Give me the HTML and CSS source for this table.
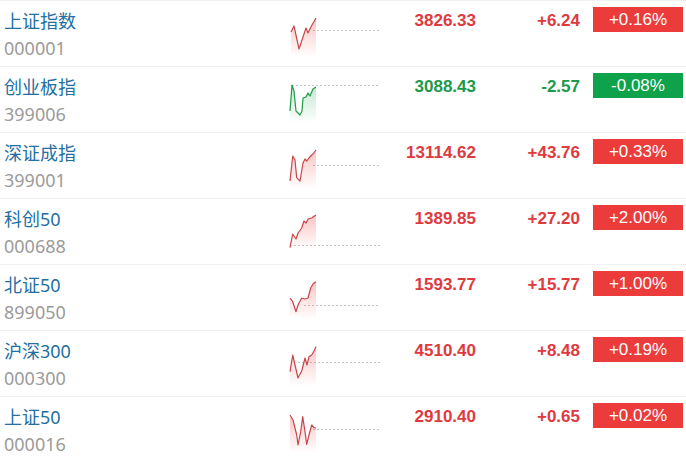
FILE: index.html
```html
<!DOCTYPE html>
<html lang="zh-CN">
<head>
<meta charset="utf-8">
<title>指数行情</title>
<link rel="stylesheet" href="styles.css">
</head>
<body>
<div class="list">

  <div class="row up">
    <div class="name"><div class="title">上证指数</div><div class="code">000001</div></div>
    <div class="spark">
      <svg width="92" height="66" viewBox="0 0 92 66">
        <defs><linearGradient id="f1" x1="0" y1="0" x2="0" y2="1"><stop offset="0" stop-color="#f04848" stop-opacity="0.32"/><stop offset="1" stop-color="#f04848" stop-opacity="0"/></linearGradient></defs>
        <line class="base" x1="25" y1="29.5" x2="92" y2="29.5"/>
        <polygon fill="url(#f1)" points="3,31 6,25 11,48 16,33 18,27 20,32 24,24 28,17 28,56 3,56"/>
        <polyline class="ln-up" points="3,31 6,25 11,48 16,33 18,27 20,32 24,24 28,17"/>
      </svg>
    </div>
    <div class="price">3826.33</div>
    <div class="chg">+6.24</div>
    <div class="badge">+0.16%</div>
  </div>

  <div class="row down">
    <div class="name"><div class="title">创业板指</div><div class="code">399006</div></div>
    <div class="spark">
      <svg width="92" height="66" viewBox="0 0 92 66">
        <defs><linearGradient id="f2" x1="0" y1="0" x2="0" y2="1"><stop offset="0" stop-color="#2aa55a" stop-opacity="0.28"/><stop offset="1" stop-color="#2aa55a" stop-opacity="0"/></linearGradient></defs>
        <line class="base" x1="4" y1="18.5" x2="92" y2="18.5"/>
        <polygon fill="url(#f2)" points="2,44 4,18 6,24 8,44 12,48 14,44 15,31 18,30 20,26 22,29 25,22 28,20 28,56 2,56"/>
        <polyline class="ln-down" points="2,44 4,18 6,24 8,44 12,48 14,44 15,31 18,30 20,26 22,29 25,22 28,20"/>
      </svg>
    </div>
    <div class="price">3088.43</div>
    <div class="chg">-2.57</div>
    <div class="badge">-0.08%</div>
  </div>

  <div class="row up">
    <div class="name"><div class="title">深证成指</div><div class="code">399001</div></div>
    <div class="spark">
      <svg width="92" height="66" viewBox="0 0 92 66">
        <defs><linearGradient id="f3" x1="0" y1="0" x2="0" y2="1"><stop offset="0" stop-color="#f04848" stop-opacity="0.32"/><stop offset="1" stop-color="#f04848" stop-opacity="0"/></linearGradient></defs>
        <line class="base" x1="25" y1="32.5" x2="92" y2="32.5"/>
        <polygon fill="url(#f3)" points="2,48 4.7,23 7,27 8.7,44.7 12,48 15,30 17,26 18.7,28 21,25 23.7,22 25,21 28,17 28,56 2,56"/>
        <polyline class="ln-up" points="2,48 4.7,23 7,27 8.7,44.7 12,48 15,30 17,26 18.7,28 21,25 23.7,22 25,21 28,17"/>
      </svg>
    </div>
    <div class="price">13114.62</div>
    <div class="chg">+43.76</div>
    <div class="badge">+0.33%</div>
  </div>

  <div class="row up">
    <div class="name"><div class="title">科创50</div><div class="code">000688</div></div>
    <div class="spark">
      <svg width="92" height="66" viewBox="0 0 92 66">
        <defs><linearGradient id="f4" x1="0" y1="0" x2="0" y2="1"><stop offset="0" stop-color="#f04848" stop-opacity="0.32"/><stop offset="1" stop-color="#f04848" stop-opacity="0"/></linearGradient></defs>
        <line class="base" x1="2" y1="46.5" x2="92" y2="46.5"/>
        <polygon fill="url(#f4)" points="2,48.7 4.7,35 8,40 10,34 13.7,29 16,22 18,24 20,20 23.7,19 25,18 28,16 28,50 2,50"/>
        <polyline class="ln-up" points="2,48.7 4.7,35 8,40 10,34 13.7,29 16,22 18,24 20,20 23.7,19 25,18 28,16"/>
      </svg>
    </div>
    <div class="price">1389.85</div>
    <div class="chg">+27.20</div>
    <div class="badge">+2.00%</div>
  </div>

  <div class="row up">
    <div class="name"><div class="title">北证50</div><div class="code">899050</div></div>
    <div class="spark">
      <svg width="92" height="66" viewBox="0 0 92 66">
        <defs><linearGradient id="f5" x1="0" y1="0" x2="0" y2="1"><stop offset="0" stop-color="#f04848" stop-opacity="0.32"/><stop offset="1" stop-color="#f04848" stop-opacity="0"/></linearGradient></defs>
        <line class="base" x1="16" y1="40.5" x2="92" y2="40.5"/>
        <polygon fill="url(#f5)" points="2,33 4.7,36.7 8,46.7 10,40 13.7,33 17,34 20,33 22.7,23 25,19 28,16.7 28,54 2,54"/>
        <polyline class="ln-up" points="2,33 4.7,36.7 8,46.7 10,40 13.7,33 17,34 20,33 22.7,23 25,19 28,16.7"/>
      </svg>
    </div>
    <div class="price">1593.77</div>
    <div class="chg">+15.77</div>
    <div class="badge">+1.00%</div>
  </div>

  <div class="row up">
    <div class="name"><div class="title">沪深300</div><div class="code">000300</div></div>
    <div class="spark">
      <svg width="92" height="66" viewBox="0 0 92 66">
        <defs><linearGradient id="f6" x1="0" y1="0" x2="0" y2="1"><stop offset="0" stop-color="#f04848" stop-opacity="0.32"/><stop offset="1" stop-color="#f04848" stop-opacity="0"/></linearGradient></defs>
        <line class="base" x1="10" y1="31.5" x2="92" y2="31.5"/>
        <polygon fill="url(#f6)" points="2,40.7 4.7,24 7,34 10,47 13.7,40 17,27 19,34 21,25.7 23.7,24 26,20 28,15.7 28,55 2,55"/>
        <polyline class="ln-up" points="2,40.7 4.7,24 7,34 10,47 13.7,40 17,27 19,34 21,25.7 23.7,24 26,20 28,15.7"/>
      </svg>
    </div>
    <div class="price">4510.40</div>
    <div class="chg">+8.48</div>
    <div class="badge">+0.19%</div>
  </div>

  <div class="row up">
    <div class="name"><div class="title">上证50</div><div class="code">000016</div></div>
    <div class="spark">
      <svg width="92" height="66" viewBox="0 0 92 66">
        <defs><linearGradient id="f7" x1="0" y1="0" x2="0" y2="1"><stop offset="0" stop-color="#f04848" stop-opacity="0.32"/><stop offset="1" stop-color="#f04848" stop-opacity="0"/></linearGradient></defs>
        <line class="base" x1="25" y1="32.5" x2="92" y2="32.5"/>
        <polygon fill="url(#f7)" points="2,18 5,23 8.7,38 10,48 12.7,34.7 14.7,19.7 17,34.7 18.7,47.3 21,38 23.7,28 26,30.7 28,31 28,56 2,56"/>
        <polyline class="ln-up" points="2,18 5,23 8.7,38 10,48 12.7,34.7 14.7,19.7 17,34.7 18.7,47.3 21,38 23.7,28 26,30.7 28,31"/>
      </svg>
    </div>
    <div class="price">2910.40</div>
    <div class="chg">+0.65</div>
    <div class="badge">+0.02%</div>
  </div>

</div>
</body>
</html>
```
FILE: styles.css
```css
html, body {
  margin: 0;
  padding: 0;
  background: #ffffff;
}

.list {
  width: 686px;
}

.row {
  display: grid;
  grid-template-columns: 288px 92px 96px 104px 1fr;
  height: 65px;
  border-top: 1px solid #eef0f2;
}

.name {
  padding: 7px 0 0 4px;
  font-family: "Noto Sans", "Noto Sans CJK SC", sans-serif;
  font-size: 18px;
  line-height: 27px;
}

.title {
  color: #226fa3;
}

.code {
  color: #9b9b9b;
}

.spark svg {
  display: block;
}

.base {
  stroke: #c4c4c4;
  stroke-width: 1;
  stroke-dasharray: 2 2;
}

.ln-up,
.ln-down {
  fill: none;
  stroke-width: 1.2;
  stroke-linejoin: round;
}

.ln-up {
  stroke: #c8464a;
}

.ln-down {
  stroke: #1f9a46;
}

.price,
.chg {
  font-family: "Liberation Sans", Arial, sans-serif;
  font-weight: bold;
  font-size: 17px;
  line-height: 20px;
  padding-top: 10px;
  text-align: right;
}

.badge {
  margin: 6px 3px 0 13px;
  height: 25px;
  line-height: 25px;
  text-align: center;
  color: #ffffff;
  font-family: "Liberation Sans", Arial, sans-serif;
  font-size: 17px;
}

.up .price,
.up .chg {
  color: #e03a3e;
}

.up .badge {
  background: #ec3b3b;
}

.down .price,
.down .chg {
  color: #1c9a4a;
}

.down .badge {
  background: #0ea24a;
}
```
